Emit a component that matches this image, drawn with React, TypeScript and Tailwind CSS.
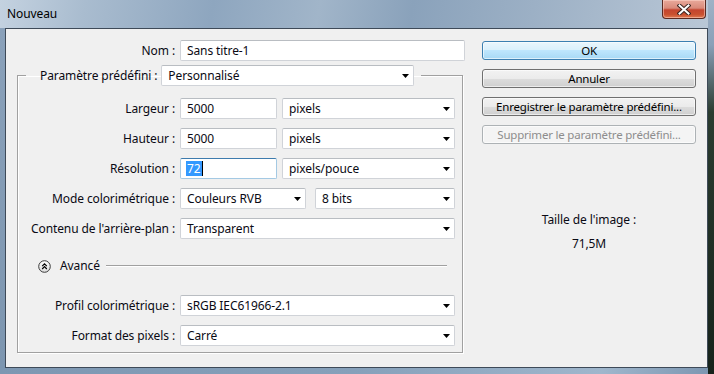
import React from "react";

function Arrow() {
  return (
    <svg width="7" height="4" viewBox="0 0 7 4" className="shrink-0">
      <path d="M0 0H7L3.5 4Z" fill="#000" />
    </svg>
  );
}

function Select({ w, text }: { w: string; text: string }) {
  return (
    <div
      className={`flex h-[21px] items-center justify-between rounded-[2px] border border-[#d0d3d8] border-t-[#b9bdc2] bg-white pl-[6px] pr-[4px] ${w}`}
    >
      <span className="whitespace-nowrap">{text}</span>
      <Arrow />
    </div>
  );
}

function Input({ w, text }: { w: string; text: string }) {
  return (
    <div
      className={`flex h-[21px] items-center rounded-[2px] border border-[#d0d3d8] border-t-[#b9bdc2] bg-white pl-[6px] ${w}`}
    >
      <span className="whitespace-nowrap">{text}</span>
    </div>
  );
}

function Row({
  label,
  children,
  className = "",
}: {
  label: string;
  children: React.ReactNode;
  className?: string;
}) {
  return (
    <div className={`flex h-[21px] items-center ${className}`}>
      <div className="w-[157px] whitespace-nowrap text-right">{label}</div>
      <div className="ml-[5px] flex items-center">{children}</div>
    </div>
  );
}

function Button({
  children,
  kind = "normal",
}: {
  children: React.ReactNode;
  kind?: "default" | "normal" | "disabled";
}) {
  const cls =
    kind === "default"
      ? "border-[#3c7fb1] bg-[linear-gradient(#eaf6fd_0%,#d9f0fc_50%,#bee6fd_50%,#a7d9f5_100%)] text-black"
      : kind === "disabled"
      ? "border-[#adb2b5] bg-[#f4f4f4] text-[#8d8d8d]"
      : "border-[#707070] bg-[linear-gradient(#f2f2f2_0%,#ebebeb_50%,#dddddd_50%,#cfcfcf_100%)] text-black";
  return (
    <div
      className={`flex h-[19px] w-[214px] items-center justify-center overflow-hidden rounded-[3px] border shadow-[inset_0_0_0_1px_rgba(255,255,255,0.6)] ${cls}`}
    >
      <span className="whitespace-nowrap text-[11.5px] leading-none tracking-[-0.2px]">{children}</span>
    </div>
  );
}

function AdvIcon() {
  return (
    <svg width="13" height="13" viewBox="0 0 13 13">
      <defs>
        <linearGradient id="ag" x1="0" y1="0" x2="0" y2="1">
          <stop offset="0" stopColor="#ffffff" />
          <stop offset="1" stopColor="#dcdcdc" />
        </linearGradient>
      </defs>
      <circle cx="6.5" cy="6.5" r="5.8" fill="url(#ag)" stroke="#3a3a3a" strokeWidth="1" />
      <path d="M4.2 6.2L6.5 3.9L8.8 6.2M4.2 9L6.5 6.7L8.8 9" fill="none" stroke="#000" strokeWidth="1.2" />
    </svg>
  );
}

function CloseX() {
  return (
    <svg width="14" height="11" viewBox="0 0 14 11">
      <path d="M2.5 1.5L11.5 9.5M11.5 1.5L2.5 9.5" stroke="#3a2420" strokeWidth="4" strokeLinecap="square" />
      <path d="M2.5 1.5L11.5 9.5M11.5 1.5L2.5 9.5" stroke="#ffffff" strokeWidth="2" strokeLinecap="square" />
    </svg>
  );
}

export default function App() {
  return (
    <div className="flex h-[374px] w-[714px] overflow-hidden bg-[#1c2a22] font-['Noto_Sans',sans-serif] text-[12px] tracking-[-0.1px] text-[#0a0a14]">
      {/* window */}
      <div className="flex w-[708px] flex-col bg-[linear-gradient(180deg,#8da5bd_0%,#7f98b2_100%)]">
        {/* title bar */}
        <div className="flex h-[28px] items-start justify-between bg-[linear-gradient(100deg,#c4d2e0_0%,#a9bccf_12%,#8ea6bf_30%,#a1b5c9_45%,#8aa2bb_58%,#9cb0c5_75%,#b9c7d6_100%)]">
          <div className="ml-[7px] mt-[6px] text-[12px] leading-[16px] text-black">Nouveau</div>
          <div className="mr-[2px] flex h-[19px] w-[44px] items-center justify-center rounded-b-[4px] border border-t-0 border-[#5a2a22] bg-[linear-gradient(180deg,#e9a99b_0%,#d98a7a_45%,#c4452f_55%,#c9502f_80%,#e07a52_100%)] shadow-[inset_0_0_0_1px_rgba(255,220,210,0.5)]">
            <CloseX />
          </div>
        </div>
        {/* middle */}
        <div className="flex h-[340px]">
          <div className="w-[5px] bg-[linear-gradient(180deg,#8aa1ba_0%,#7d96b0_100%)]" />
          <div className="flex h-[340px] w-[703px] border border-[#3e4a58] bg-[#f0f0f0]">
            {/* left column */}
            <div className="ml-[11px] mt-[11px] flex w-[448px] flex-col">
              <div className="flex h-[21px] items-center">
                <div className="w-[158px] whitespace-nowrap text-right">Nom :</div>
                <Input w="ml-[5px] w-[285px]" text="Sans titre-1" />
              </div>
              <fieldset className="mt-[4px] w-[446px] border border-[#a0a0a0] pb-[6px] pt-[12px] shadow-[inset_1px_1px_0_#ffffff,1px_1px_0_#ffffff]">
                <legend className="ml-[8px] flex items-center pl-[14px] pr-[7px]">
                  <span className="whitespace-nowrap">Paramètre prédéfini :</span>
                  <Select w="ml-[4px] w-[253px]" text="Personnalisé" />
                </legend>
                <div className="flex flex-col gap-[9px]">
                  <Row label="Largeur :">
                    <Input w="w-[97px]" text="5000" />
                    <Select w="ml-[5px] w-[173px]" text="pixels" />
                  </Row>
                  <Row label="Hauteur :">
                    <Input w="w-[97px]" text="5000" />
                    <Select w="ml-[5px] w-[173px]" text="pixels" />
                  </Row>
                  <Row label="Résolution :">
                    <div className="flex h-[21px] w-[97px] items-center rounded-[2px] border border-[#a4c9e3] border-t-[#3d7bad] bg-white pl-[5px]">
                      <span className="bg-[#3399ff] px-[1px] leading-[15px] text-white">72</span>
                      <span className="h-[15px] w-[1px] bg-black" />
                    </div>
                    <Select w="ml-[5px] w-[173px]" text="pixels/pouce" />
                  </Row>
                  <Row label="Mode colorimétrique :">
                    <Select w="w-[126px]" text="Couleurs RVB" />
                    <Select w="ml-[9px] w-[140px]" text="8 bits" />
                  </Row>
                  <Row label="Contenu de l'arrière-plan :">
                    <Select w="w-[275px]" text="Transparent" />
                  </Row>
                </div>
                <div className="ml-[20px] mt-[18px] flex h-[18px] items-center">
                  <AdvIcon />
                  <span className="ml-[9px] whitespace-nowrap">Avancé</span>
                  <div className="ml-[6px] h-[2px] w-[341px] border-t border-[#a0a0a0] border-b-white border-b" />
                </div>
                <div className="mt-[20px] flex flex-col gap-[9px]">
                  <Row label="Profil colorimétrique :">
                    <Select w="w-[275px]" text="sRGB IEC61966-2.1" />
                  </Row>
                  <Row label="Format des pixels :">
                    <Select w="w-[275px]" text="Carré" />
                  </Row>
                </div>
              </fieldset>
            </div>
            {/* right column */}
            <div className="ml-[17px] mt-[12px] flex w-[214px] flex-col">
              <div className="flex flex-col gap-[9px]">
                <Button kind="default">OK</Button>
                <Button>Annuler</Button>
                <Button>Enregistrer le paramètre prédéfini...</Button>
                <Button kind="disabled">Supprimer le paramètre prédéfini...</Button>
              </div>
              <div className="mt-[68px] text-center leading-[16px]">Taille de l'image :</div>
              <div className="mt-[8px] text-center leading-[16px]">71,5M</div>
            </div>
          </div>
        </div>
        {/* bottom frame */}
        <div className="h-[6px] bg-[linear-gradient(90deg,#7d97b2_0%,#86a0ba_50%,#9fb6cc_85%,#7d97b2_100%)]" />
      </div>
      {/* desktop strip */}
      <div className="w-[6px] bg-[linear-gradient(180deg,#9fb2c6_0%,#8aa0b8_12%,#2b3c30_30%,#16231b_100%)]" />
    </div>
  );
}
